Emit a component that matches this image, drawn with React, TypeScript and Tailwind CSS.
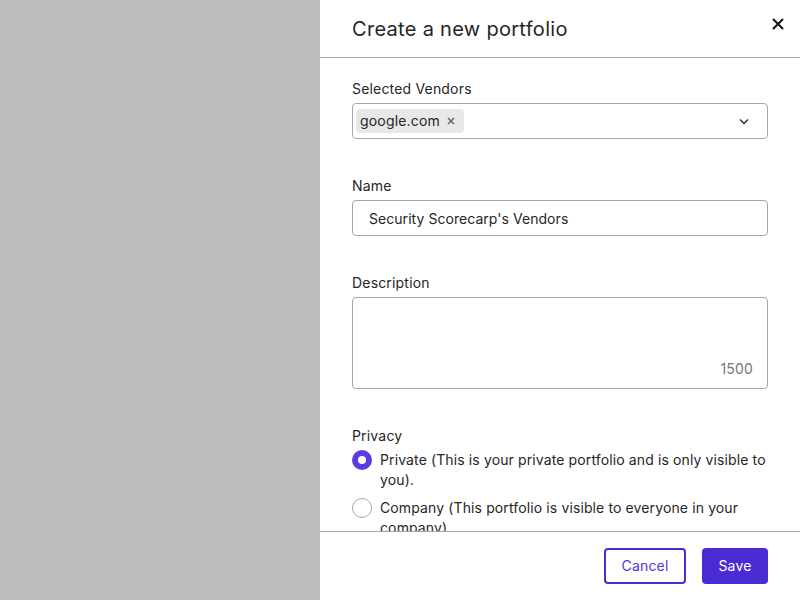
import React from 'react';

export default function App() {
  const [privacy, setPrivacy] = React.useState('private');
  const [name, setName] = React.useState("Security Scorecarp's Vendors");

  return (
    <div className="flex h-[600px] w-[800px] font-['Inter',sans-serif] tracking-[0.18px] text-[#262626]">
      <div className="flex-1 bg-[#bdbdbd]" />
      <div className="flex h-full w-[480px] flex-col bg-white">
        <div className="flex h-[58px] shrink-0 items-center justify-between border-b border-[#a6a6a6] pl-8 pr-4">
          <h2 className="text-[20px] leading-7 tracking-[0.3px] text-[#262626]">Create a new portfolio</h2>
          <button className="-mt-[10px] text-[#111]">
            <svg width="12" height="12" viewBox="0 0 12 12" fill="none" stroke="currentColor" strokeWidth="2" strokeLinecap="round">
              <path d="M1.5 1.5l9 9M10.5 1.5l-9 9" />
            </svg>
          </button>
        </div>

        <div className="flex-1 overflow-hidden px-8 pt-[21px]">
          <label className="block text-sm leading-5">Selected Vendors</label>
          <div className="mt-1 flex h-9 items-center rounded border border-[#a6a6a6] pl-[3px] pr-4">
            <span className="flex h-6 items-center gap-[7px] rounded bg-[#e8e8e8] pl-1 pr-[9px] text-sm">
              google.com
              <svg width="8" height="8" viewBox="0 0 8 8" stroke="#666" strokeWidth="1.5">
                <path d="M1 1l6 6M7 1L1 7" />
              </svg>
            </span>
            <svg className="ml-auto" width="14" height="14" viewBox="0 0 14 14" fill="none" stroke="#333" strokeWidth="1.5">
              <path d="M3 5.5L7 9.5l4-4" />
            </svg>
          </div>

          <label className="mt-[37px] block text-sm leading-5">Name</label>
          <input
            className="mt-1 h-9 w-full rounded border border-[#a6a6a6] px-4 text-sm tracking-[0.05px] text-[#262626] outline-none"
            value={name}
            onChange={(e) => setName(e.target.value)}
          />

          <label className="mt-[37px] block text-sm leading-5">Description</label>
          <div className="mt-1 flex h-[92px] flex-col rounded border border-[#a6a6a6] pl-4 pr-[14px] pb-[9px]">
            <textarea className="flex-1 resize-none pt-2 text-sm outline-none" />
            <span className="self-end text-sm text-[#757575]">1500</span>
          </div>

          <label className="mt-[37px] block text-sm leading-5">Privacy</label>
          <div className="mt-1 flex flex-col gap-2">
            {[
              { value: 'private', label: 'Private (This is your private portfolio and is only visible to you).' },
              { value: 'company', label: 'Company (This portfolio is visible to everyone in your company).' },
            ].map((opt) => (
              <label key={opt.value} className="flex cursor-pointer gap-2 text-sm leading-5 tracking-[0.12px]" onClick={() => setPrivacy(opt.value)}>
                {privacy === opt.value ? (
                  <span className="flex h-5 w-5 shrink-0 items-center justify-center rounded-full bg-[#5c3be0]">
                    <span className="h-2 w-2 rounded-full bg-white" />
                  </span>
                ) : (
                  <span className="h-5 w-5 shrink-0 rounded-full border border-[#a6a6a6] bg-white" />
                )}
                <span>{opt.label}</span>
              </label>
            ))}
          </div>
        </div>

        <div className="flex h-[69px] shrink-0 items-start justify-end gap-4 border-t border-[#a6a6a6] px-8 pt-4">
          <button className="h-9 w-[82px] rounded border-2 border-[#4a2bd4] text-sm text-[#5535dc]">Cancel</button>
          <button className="h-9 w-[66px] rounded bg-[#4a2bd4] text-sm text-white">Save</button>
        </div>
      </div>
    </div>
  );
}
